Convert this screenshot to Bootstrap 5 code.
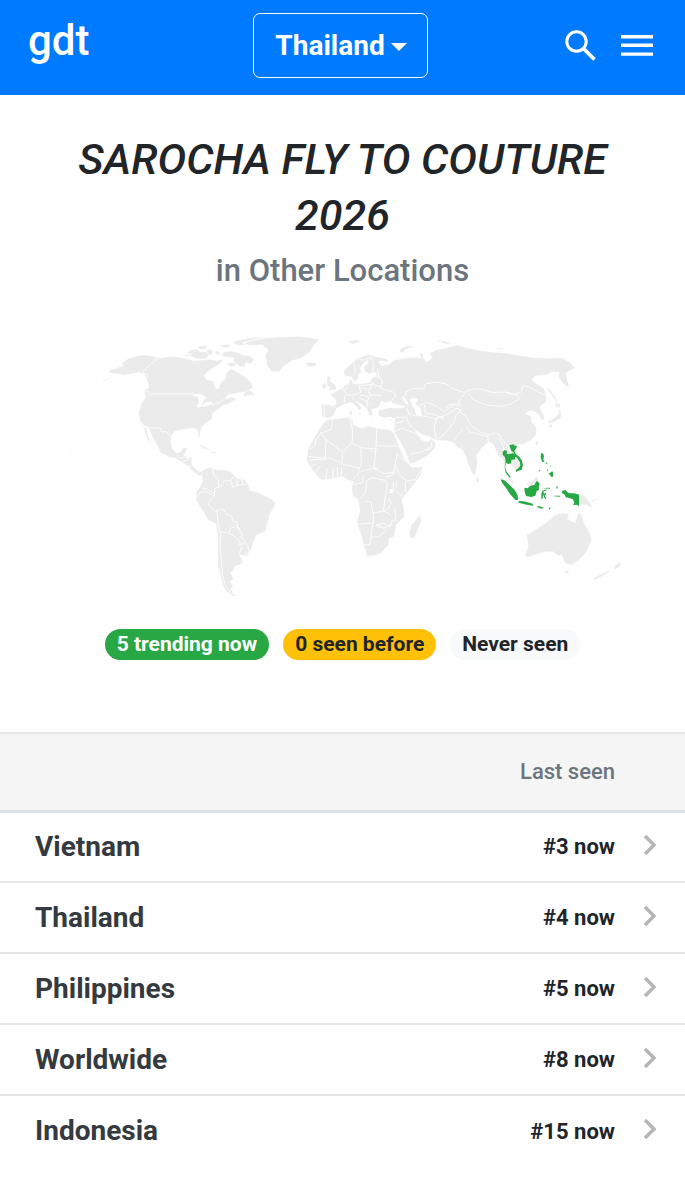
<!DOCTYPE html>
<html lang="en">
<head>
<meta charset="utf-8">
<meta name="viewport" content="width=device-width, initial-scale=1">
<title>gdt - Other Locations</title>
<link href="https://cdn.jsdelivr.net/npm/bootstrap@5.3.0/dist/css/bootstrap.min.css" rel="stylesheet">
<style>
body { font-family: Roboto, "Liberation Sans", sans-serif; color: #212529; background: #fff; }
.topbar { background: #007bff; padding: 13px 32px 17px 28px; display: grid; grid-template-columns: 1fr auto 1fr; align-items: center; }
.brand-link { font-size: 42px; line-height: 55px; font-weight: 500; color: #fff; text-decoration: none; justify-self: start; margin-bottom: 10px; }
.place-btn { font-size: 28px; line-height: 40px; font-weight: 700; color: #fff; border: 1px solid #fff; border-radius: 7px; padding: 12px 20px 11px 21px; }
.place-btn:hover { color: #fff; border-color: #fff; background: #0069d9; }
.place-btn::after { margin-left: 6px; border-top-width: 8px; border-left-width: 8px; border-right-width: 8px; vertical-align: 4px; }
.icon-btn { background: none; border: 0; padding: 0; color: #fff; line-height: 0; }
.topic { font-size: 43px; line-height: 56px; font-weight: 500; font-style: italic; margin: 0; }
.subtopic { font-size: 31px; line-height: 40px; font-weight: 500; color: #6c757d; margin: 8px 0 0; }
.world { display: block; width: 100%; margin-top: 34px; }
.land { fill: #ebebeb; stroke: #fff; stroke-width: 1; }
.edges { fill: none; stroke: #fff; stroke-width: 2.5; stroke-linejoin: round; }
.hot { fill: #28a745; }
.sea { fill: #fff; }
.legend { gap: 14px; padding-top: 24px; padding-bottom: 72px; }
.pill { font-size: 21px; line-height: 31px; font-weight: 700; border-radius: 16px; padding: 0 12px; }
.pill-now { background: #28a745; color: #fff; }
.pill-before { background: #ffc107; color: #212529; }
.pill-never { background: #f8f9fa; color: #212529; }
.places { margin: 0; width: 100%; border-collapse: collapse; }
.places th, .places td { padding: 0; border: 0; vertical-align: middle; }
.places thead th { height: 78px; background: #f5f5f5; border-top: 2px solid #e4e6e8; border-bottom: 3px solid #dee2e6; font-size: 22px; font-weight: 500; color: #6c757d; }
.places tbody tr { height: 71px; }
.places tbody tr + tr { border-top: 2px solid #e4e6e8; }
.places tbody th { padding-left: 35px; font-size: 28px; font-weight: 700; }
.places tbody th a { color: #343a40; text-decoration: none; }
.places .rank { font-size: 22px; font-weight: 700; text-align: right; }
.places .go { width: 70px; padding: 0 0 4px 28px; line-height: 0; }
</style>
</head>
<body>
<header class="topbar">
  <a class="brand-link" href="#">gdt</a>
  <button class="btn place-btn dropdown-toggle" type="button" data-bs-toggle="dropdown" aria-expanded="false">Thailand</button>
  <div class="d-flex align-items-center justify-content-end gap-4">
    <button class="icon-btn" type="button" aria-label="Search">
      <svg width="32" height="32" viewBox="0 0 32 32" fill="none" stroke="currentColor"><circle cx="11.5" cy="11.5" r="9.7" stroke-width="3"/><path d="M18.5 18.5 29.5 29.5" stroke-width="3.8"/></svg>
    </button>
    <button class="icon-btn" type="button" aria-label="Menu">
      <svg width="32" height="32" viewBox="0 0 32 32" fill="currentColor"><path d="M0 5h32v3.4H0zM0 13.6h32V17H0zM0 22.4h32v3.4H0z"/></svg>
    </button>
  </div>
</header>

<main>
  <section class="text-center">
    <div class="px-5 pt-4">
      <h1 class="topic pt-2 mt-1">SAROCHA FLY TO COUTURE 2026</h1>
      <p class="subtopic">in Other Locations</p>
    </div>
    <svg class="world" viewBox="0 325 685 280" role="img" aria-label="World map of trending locations">
      <!-- North and Central America -->
      <g transform="translate(60 325) scale(.33333)">
        <path class="land" d="M147 143l5-9 20-5 18-7-4-8 16-11 23-9 25-4 25 3 25 6 20-3 30-1 25 5 25 7 30-2 20-2 20 4 20-6-5 11-15 10-15 10-23 19 8 13 20 5 6 20 9 4 7-19 15-15 3-18 15-9 15 9 15 8 15 10 15 15 3 15-18 10-30 5-25 5-10 12 25-4 8 6-23 14-15 4-10 8-15 10-8 8-2 15-15 10-15 15-5 15 1 17-5-4-4-20-12-6-20 2-20 4-15 4-10 13-3 20 6 20 12 13 12-4 6-12 14-2-4 12-8 12 15 4 11 4-2 16 10 14 16 12 18-7-2 10-16 9-23-14-12-16-20-12-18-11-20-4-25-14-8-17-17-30-9-23-16-10-12-15-4-23 8-27 13-20-5-20 15-10-7-25-8-15-15-5-25 5-20 3z"/>
        <path class="land" d="M126 168l18-9 2 3-19 8zM252 196l10 4 8 12-4 3zM251 307l8 3 6 22 7 20-8-6-8-20zM378 84l14-9 20-2 8 7 22 2 4 10-14 10-26-2-16-8 6-4zM372 92l16-5 4 4-14 5zM414 66l16-5 14 4-10 7-14 1zM440 76l14-3 6 10-10 8-8-5zM466 78l14 2-2 9-12-2zM478 62l24-4 14 5-20 6zM490 82l26-4 20 6 14 7 20 2 12 12-10 12-14-6-4 14-14 0-18-14 0-14-22 0-14-6zM518 52l22-8 30-5 30-2 34 1-24 10-30 5-34 8-18-2zM500 116l22-4 8 9-18 5zM560 196l14 2 10 14-22-2-6 5-6-5zM414 358l20 6 18 12-18-4zM452 378l24 5-20 2zM28 374l6 2-1 5z"/>
        <path class="edges" d="M296 96l-49 46 16 8-3 12M250 196l16 4 6 7H400l18 6M495 222l16-12M457 243l36-20M251 303l28 6 21 0 6 12 12-2 9 10 8 8M352 392l10 8 12-4 14 3M370 410l18-8M385 424l16-2"/>
        <path class="sea" d="M400 208l20-1 14 6 6 9-8 1-8 22-14 3 6-19-2-13-14-3zM436 232l20-2 2 7-12 3-12 7-8-2z"/>
      </g>
      <!-- Greenland -->
      <path class="land" d="M243 343L258 339 275 337 300 336 320 339 314 345 310 352 302 358 292 361 284 366 279 372 272 372 267 366 265 355 268 350 262 345 250 346z"/>
      <!-- South America -->
      <g transform="translate(180 420) scale(.33333)">
        <path class="land" d="M68 152L80 145 95 142 110 150 140 150 155 158 170 175 195 180 205 195 210 210 235 218 255 228 280 240 286 252 278 268 268 285 265 305 255 335 230 345 220 365 212 390 200 410 185 405 178 405 188 420 185 432 165 438 160 450 152 458 160 478 150 485 160 500 152 505 160 522 178 528 160 528 140 515 128 495 120 455 114 440 114 380 112 340 108 312 85 300 70 275 48 240 50 215 60 200 68 185 66 165z"/>
        <path class="edges" d="M97 143l4 22 14 12 2 24-12 4-2 24-24-14-18 2-12 18M66 206l14 0 24 16M117 201l10-4 6-14 18-2 10-12M152 180l6 22 14-6 30-4M168 178l6 18M186 180l2 14M103 229l-14 14-4 12 8 8 12 10 16-6 10 2 6 12 18 8 4 16 12 0 4 22 12 14-4 10 20 26 4 18-14 14 12 10 6 8M110 272l4 36 6 30 14-2 12 4 6-16 16-4 12 8M146 340l16 8 18 16-2 10 14-4M122 340l-2 40 4 40 4 50 10 30 16 18M186 380l-8 22"/>
      </g>
      <!-- Europe, Asia and Africa -->
      <g transform="translate(290 325) scale(.33333)">
        <path class="land" d="M95 238L120 240 137 240 138 225 118 208 132 205 140 198 158 190 165 180 175 178 180 165 175 158 185 165 190 176 205 178 240 172 247 156 262 150 256 142 238 146 225 140 222 126 236 112 232 105 218 118 210 130 214 142 205 148 205 160 192 172 185 155 165 152 160 138 185 115 205 98 238 88 262 95 292 102 295 110 272 108 265 112 275 122 300 118 310 105 330 102 350 98 375 98 395 100 388 85 400 88 412 102 418 108 428 95 418 85 440 75 470 68 500 60 530 68 560 75 610 82 650 85 690 92 735 98 780 100 815 98 840 112 855 130 840 136 828 145 832 165 838 190 820 176 805 156 808 142 785 140 770 150 735 152 725 165 745 180 760 190 770 210 768 232 755 240 750 250 758 265 765 282 755 286 745 268 730 258 715 258 706 268 722 272 725 290 740 310 738 332 720 348 700 357 678 360 676 372 695 405 695 425 680 437 665 420 650 415 648 435 660 455 670 470 672 478 662 470 648 445 642 420 638 400 625 395 618 375 610 358 600 352 590 355 575 370 560 390 562 415 556 450 548 448 536 420 526 390 516 372 503 368 490 352 470 347 440 345 418 335 400 330 375 315 382 328 395 345 415 350 424 342 438 355 435 370 415 390 370 415 358 415 345 375 315 325 312 310 315 280 300 276 285 278 265 272 266 256 285 252 300 248 330 250 345 246 330 240 310 236 302 228 285 234 275 226 270 240 262 250 245 252 248 272 238 270 230 250 210 235 196 226 215 248 208 258 200 245 185 232 172 235 160 240 140 250 130 272 115 280 95 275z"/>
        <path class="land" d="M112 152l10 4-2 12 12 8 8 12-4 6-24 2 8-8-10-12zM96 178l12-6 2 14-12 8zM45 115l12-3 22 2-2 8-20 4zM172 50l20-4 26 0-14 6-14 6zM328 80l8-12 20-6 16 2-26 10-10 10zM434 44l30 4 22 10-20-2zM620 69l20 0-2 4-18-1zM560 455l8 8-2 10-8-4zM768 182l14 14 22 34-4 2-24-34zM800 232l12 6-2 8-12 2-4-8zM806 250l8 14-2 16-18 10-18 6-2-6 20-12 12-12zM782 296l6 6-6 8-4-8zM738 348l6 2-3 14-5-4zM178 258l8-2 1 14-8 1zM204 264l10 0-4 6zM242 284l14 2-12 2zM298 285l10-3-4 6z"/>
        <path class="land" d="M95 300L110 285 130 283 175 277 188 283 190 300 215 310 235 302 262 310 300 315 312 325 325 360 345 405 365 427 398 425 392 450 370 480 345 510 335 525 343 555 343 575 318 600 312 635 298 640 295 660 270 687 232 695 222 665 215 635 200 590 210 560 205 525 188 510 185 490 190 470 175 465 160 455 130 460 95 465 75 445 60 425 50 405 55 370 75 335z"/>
        <path class="land" d="M390 570L394 588 374 638 362 640 358 625 364 600z"/>
        <path class="edges" d="M262 130l4 24 12 14-4 18-26-8-40 4M245 155l26 2M248 172l-8 22-34-6M272 190l40 12 6 12-14 12M240 210l38 2M208 184l4 18-20 8-4 16M160 192l12 18 20 0M165 210l-2 24M118 240l18 6M104 240l-2 34M192 112l4 32M205 100l14 6 12-6 12 2 14-8M240 90l10 22-2 26 10 10M236 196l4 18-10 16 14 12M210 210l26 4M212 220l18 10 2 14M176 184l-12 12M348 215l-2-14 20-10 36 0 4-14 32-6 32 6 18 14 24 8 12 4 10-6 24-6 20 2 30 10 36-2 30 6 20-6 4-18 18 2 26 14 18 10 14 4 0 26-12 6M530 202l24 24 36 14 40 4 30-6 28-16-4-10-34-8M526 206l-14 12-6 18-30 4-10 10M386 242l24-10 26 10 28 18 26-20 24 0M404 238l2 26 30 6 28 12M394 272l28 6 16 4 30-12 20-12 12-8 14 4-16 16-6 20-14 22-16 16-16 14M346 250l14 16 18 8M358 272l-6-24M318 278l30-2 14 28 14 12M318 296l24-10M314 318l24-8 44 18M314 306l8-4M358 388l34-6 14-8 16-2 4-22M440 342l-8-30 8-34M510 262l18 10 10 24 30 24 32 10 14-6 12 2 12 20 14 12M490 348l10-14 18-20M528 304l10 16 30 8 30 8M596 356l-4-24M628 340l12 26 8 34M652 360l8 20 20 24M335 222l22 22"/>
        <path class="edges" d="M90 325l34-12 4-28M90 325l18 16-2 58M180 280l8 34-2 38-28 30-52-40M60 372l14-10 4-18 12-14M186 354l26 14 46 4 2-62M212 368l2 48-6 14-54-14M262 362l60 2M258 372l-6 58 12 0M158 382l-2 30M106 399l-50-4M62 405l44-2 14-4 32 14M208 430l-4 20-16 14M214 440l34-10 14 6 20 10 28-4M322 382l-8 50-6 18-20 6M324 390l24 22M318 424l10 26 24 18 24-4 18-30M190 478l28-4 2-24M230 468l14-10 40 8 8 10-4 28-8 54M230 470l-4 34-18 18M222 528l22 4 4 32M204 598l46-4 0-30 32-6 18 10M248 596l-8 62-18 2M258 600l22-6 20 12 8-22M258 600l24 10 18-12M244 636l20 0 24-20M310 470l0 22 28 22M296 520l8 14-6 14M312 550l6 22-4 18M280 560l20-14M318 468l2 20M108 462l4-34M128 460l2-32M142 458l0-32M152 456l4-30M75 445l16-22M60 425l18-8M346 468l0 32"/>
        <path class="sea" d="M358 222l20-4 6 8-8 10 16 14 4 22-16 2-8-24-8-12zM298 492l12 0-2 12-10 0zM402 82l16 24-6 6-14-14zM335 215l6-1 14 20-4 4z"/>
      </g>
      <!-- South-East Asia and Oceania -->
      <g transform="translate(480 420) scale(.33333)">
        <path class="land" d="M140 345L165 330 195 310 215 295 225 285 245 280 268 282 262 298 285 308 295 278 305 285 312 310 330 340 335 360 320 395 300 418 275 435 255 430 245 405 235 408 220 395 195 395 165 405 140 412 135 405 145 380zM256 452l14-1-6 9-10 2zM340 475l26-14 22-10-2 6-20 12-22 10zM402 440l12-10-2-14 6 12 8 4-12 12-10 4zM298 222l20 10 12 18 10 14-20-10-22 0zM138 192l14-6 18-16 8 14-14 6-12 10zM335 242l16-6 4 3-18 6zM474 310l5 2-3 4zM402 332l6 4-2 2z"/>
        <path class="hot" d="M88 76l12-3 4 4 7 0-2 8-6 7 4 10 12 10 7 10 3 14-4 14-10 2-6 4-2-6 8-5 6-8-1-10-9-14-10-7 1-8-8-6zM68 95l7-5 6 3-1 9 10 0 9-3 5 7 2 12-12 2-1 10-8 2-6-4-4 12 4 14 6 8 8 10-5 0-11-14-3-16 3-16-2-14-7-8zM62 178l10 2 18 16 14 14 9 16 1 14-8 0-16-18-10-16-14-18zM116 243l16 1 26 7 2 6-20-3-24-6zM133 203l10 2 8-8 12-2 6-11 6 1 4 8-3 10 2 6-8 4-4 14-12 4-16-3-4-13zM183 100l6 0 3 8-2 12 4 6-8-1-4-13zM196 126l8 5-5 1zM200 146l4 4-2 5zM180 150l-4 8 1-8zM210 136l3 4-3 0zM205 161l12-7 3 6-1 10-6 0-3-6zM187 212l14-4-3 4-8 2 2 7 6-3 1 4-5 4 4 8 0 5-6-7-3-9-1 13-4 0 0-14zM190 204l20-1 0 3-20-1zM230 198l3 2 0 6-4-1zM222 227l20 0-2 3-18-1zM247 212l10-2 4 6 8 4 14 0 14 4 0 34-8-4-10 2 4-8-4-10-12-4-10-2-4-9-8-4zM170 260l8-2 14 6-8 2zM206 264l7-2-4 7z"/>
      </g>
    </svg>
    <div class="d-flex justify-content-center flex-wrap px-3 legend">
      <span class="pill pill-now">5 trending now</span>
      <span class="pill pill-before">0 seen before</span>
      <span class="pill pill-never">Never seen</span>
    </div>
  </section>

  <table class="places">
    <thead>
      <tr><th scope="col" aria-label="Location"></th><th class="text-end" scope="col">Last seen</th><th aria-label="Open"></th></tr>
    </thead>
    <tbody>
      <tr><th scope="row"><a href="#">Vietnam</a></th><td class="rank">#3 now</td><td class="go"><svg width="14" height="22" viewBox="0 0 14 22" fill="none" stroke="#b5b5b5" stroke-width="3.4"><path d="M2 2l9 9-9 9"/></svg></td></tr>
      <tr><th scope="row"><a href="#">Thailand</a></th><td class="rank">#4 now</td><td class="go"><svg width="14" height="22" viewBox="0 0 14 22" fill="none" stroke="#b5b5b5" stroke-width="3.4"><path d="M2 2l9 9-9 9"/></svg></td></tr>
      <tr><th scope="row"><a href="#">Philippines</a></th><td class="rank">#5 now</td><td class="go"><svg width="14" height="22" viewBox="0 0 14 22" fill="none" stroke="#b5b5b5" stroke-width="3.4"><path d="M2 2l9 9-9 9"/></svg></td></tr>
      <tr><th scope="row"><a href="#">Worldwide</a></th><td class="rank">#8 now</td><td class="go"><svg width="14" height="22" viewBox="0 0 14 22" fill="none" stroke="#b5b5b5" stroke-width="3.4"><path d="M2 2l9 9-9 9"/></svg></td></tr>
      <tr><th scope="row"><a href="#">Indonesia</a></th><td class="rank">#15 now</td><td class="go"><svg width="14" height="22" viewBox="0 0 14 22" fill="none" stroke="#b5b5b5" stroke-width="3.4"><path d="M2 2l9 9-9 9"/></svg></td></tr>
    </tbody>
  </table>
</main>
<script src="https://cdn.jsdelivr.net/npm/bootstrap@5.3.0/dist/js/bootstrap.bundle.min.js"></script>
</body>
</html>
